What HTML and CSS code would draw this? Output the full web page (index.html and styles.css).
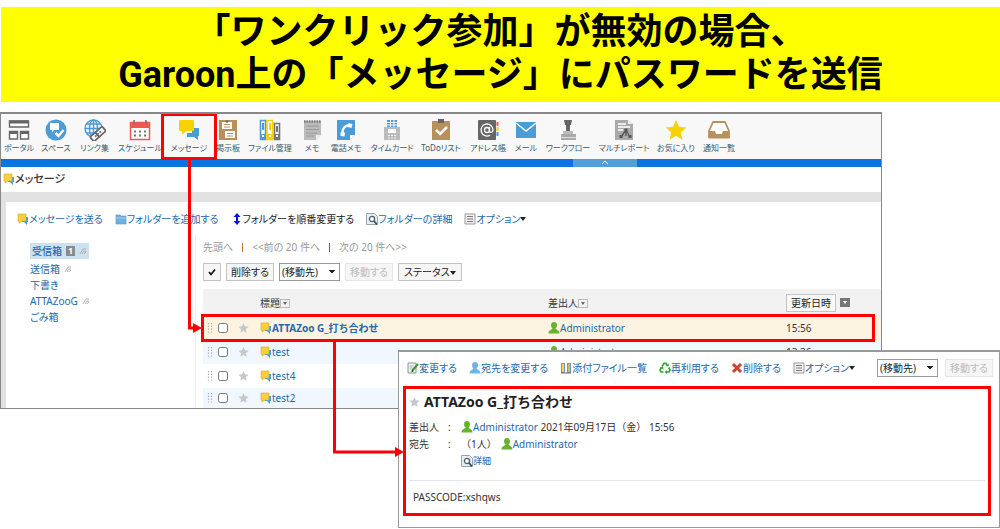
FILE: index.html
```html
<!DOCTYPE html>
<html lang="ja">
<head>
<meta charset="utf-8">
<title>メッセージ</title>
<link rel="stylesheet" href="styles.css">
</head>
<body>
<svg class="defs" aria-hidden="true">
  <symbol id="msg" viewBox="0 0 12 12"><path d="M5 4h6v5h-1v3L7 9H5z" fill="#3fa3e3"/><path d="M1 1h8v7H5l-3 2V8H1z" fill="#f9cf3e" stroke="#d9a92a" stroke-width=".6"/></symbol>
  <symbol id="folder" viewBox="0 0 12 12"><path d="M1 2h4l1 1h5v8H1z" fill="#6fb1dc" stroke="#4b93c5" stroke-width=".6"/><path d="M1 5h10" stroke="#a9d3ef"/></symbol>
  <symbol id="updown" viewBox="0 0 8 12"><path d="M4 0l3.500 4H5v4h2.500L4 12 .5 8H3V4H.5z" fill="#0a14e0"/></symbol>
  <symbol id="detail" viewBox="0 0 12 12"><path d="M.5.5h8l3 3v8H.5z" fill="#e6f0f2" stroke="#90a7ad"/><circle cx="6" cy="6" r="2.600" fill="#fff" stroke="#4d5f66" stroke-width="1.300"/><path d="M8 8l3 3.500" stroke="#3e4d52" stroke-width="1.800"/></symbol>
  <symbol id="list" viewBox="0 0 12 12"><path d="M1 1h10v10H1z" fill="#f2f2f2" stroke="#999"/><path d="M3 3.500h6M3 6h6M3 8.500h6" stroke="#777"/></symbol>
  <symbol id="rss" viewBox="0 0 8 8"><path d="M1 7l3-5h3M3 7l2-3h2M5 7l1-1.500h1" fill="none" stroke="#aaa" stroke-width=".9"/></symbol>
  <symbol id="star" viewBox="0 0 12 12"><path d="M6 .5l1.600 3.700 4 .4-3 2.700.9 4L6 9.200l-3.500 2.100.9-4-3-2.700 4-.4z"/></symbol>
  <symbol id="person" viewBox="0 0 12 12"><path d="M6 0c2 0 3 1.400 3 3.200C9 5 8 6 7.500 6.600 8 8 11.500 8 11.500 11.500H.5C.5 8 4 8 4.500 6.600 4 6 3 5 3 3.200 3 1.400 4 0 6 0z"/></symbol>
  <symbol id="edit" viewBox="0 0 12 12"><path d="M1 1h8v10H1z" fill="#f0f4f0" stroke="#8a9a92"/><path d="M2.500 4h4M2.500 6h3" stroke="#aab"/><path d="M11 2L5 9" stroke="#3c9b35" stroke-width="2.200"/><path d="M5.500 8L4 10.500l2.500-1.300z" fill="#333"/></symbol>
  <symbol id="files" viewBox="0 0 12 12"><path d="M1 1h10v10H1z" fill="#5aa0d4"/><path d="M2 2h2v8H2z" fill="#f4d35b"/><path d="M5 1h2v10H5z" fill="#fff"/><path d="M8 2h2v8H8z" fill="#e0b64a"/><path d="M1 11h10" stroke="#8a6a35"/></symbol>
  <symbol id="recycle" viewBox="0 0 12 12"><path d="M3 4.500L5 1.300h2l1.500 2.500M9.700 5.500L11 8l-1 2H7.500M4.500 10H2L1 8l1.500-2.700" fill="none" stroke="#2eab2e" stroke-width="1.700"/><path d="M6.800 4.300h3V1.500zM8 8v4L5.500 10zM.5 5.500l3.700-.8.3 2.800z" fill="#2eab2e"/></symbol>
  <symbol id="cross" viewBox="0 0 12 12"><path d="M2 2l8 8M10 2l-8 8" stroke="#d2402e" stroke-width="3"/></symbol>
  <symbol id="drag" viewBox="0 0 6 12"><path d="M1.500 1v11M4.500 1v11" stroke="#aaa" stroke-width="1.200" stroke-dasharray="1.200 1.600"/></symbol>
</svg>

<main class="stage">
  <h1 class="banner">「ワンクリック参加」が無効の場合、<br>Garoon上の「メッセージ」にパスワードを送信</h1>

  <section class="window">
    <nav class="apps">
      <a href="#"><svg viewBox="0 0 22 22"><path d="M1.500 2h19v6h-19zM1.500 12.500h8v7.500h-8zM12.500 12.500h8v7.500h-8z" fill="#fff" stroke="#666" stroke-width="1.400"/><path d="M1 1.500h20v3H1zM1 12h9v3H1zM12 12h9v3h-9z" fill="#666"/></svg>ポータル</a>
      <a href="#"><svg viewBox="0 0 22 22"><circle cx="11" cy="11" r="10.500" fill="#4a9bd6"/><path d="M5 4h9v7H9l-2 2.500V11H5z" fill="#fff"/><path d="M10.500 14l3 3 5-6" fill="none" stroke="#fff" stroke-width="2.500"/></svg>スペース</a>
      <a href="#"><svg viewBox="0 0 22 22"><g fill="none" stroke="#4a9bd6" stroke-width="1.400"><circle cx="9.500" cy="9.500" r="8.500"/><ellipse cx="9.500" cy="9.500" rx="4" ry="8.500"/><path d="M9.500 1v17M1 9.500h17M2.500 5h14M2.500 14h14"/></g><g transform="rotate(-42 14 15)" fill="#fff" stroke="#666" stroke-width="1.700"><rect x="6" y="12" width="9" height="6" rx="1"/><rect x="13" y="12" width="9" height="6" rx="1"/><path d="M10 15h8" stroke-dasharray="2 1"/></g></svg>リンク集</a>
      <a href="#"><svg viewBox="0 0 22 22"><path d="M1.500 3.500h19v17h-19z" fill="#fff" stroke="#ed5a4f" stroke-width="1.500"/><path d="M1 3h20v6H1z" fill="#ed5a4f"/><path d="M5 1v4M17 1v4" stroke="#777" stroke-width="1.600"/><path d="M5 12.500h12M5 16.500h12" stroke="#777" stroke-width="2" stroke-dasharray="2 3"/></svg>スケジュール</a>
      <a href="#" class="current"><svg viewBox="0 0 22 22"><path d="M14 9h7v8h-1v4l-4-3H9v-4h5z" fill="#4a9bd6"/><path d="M2 1h13a1 1 0 0 1 1 1v9a1 1 0 0 1-1 1H8l-4 4v-4H2a1 1 0 0 1-1-1V2a1 1 0 0 1 1-1z" fill="#f7d200"/></svg>メッセージ</a>
      <a href="#"><svg viewBox="0 0 22 22"><path d="M2 1h18v20H2z" fill="#b8905a"/><path d="M5 3h10v7H5zM8 12h10v7H8z" fill="#fff"/><path d="M7 5.500h6M7 8h6M10 14.500h6M10 17h6" stroke="#b8905a"/><circle cx="10" cy="2.500" r="1.200" fill="#666"/></svg>掲示板</a>
      <a href="#"><svg viewBox="0 0 22 22"><g fill="#fff" stroke-width="1.600"><path d="M1.500 1.500h5v19h-5z" stroke="#4a9bd6"/><path d="M8 1.500h5.500v19H8z" stroke="#f7d200"/><path d="M15.500 4.500h5v16h-5z" stroke="#777"/></g><path d="M3 4h2v7H3z" fill="#4a9bd6"/><path d="M10 4h2v7h-2z" fill="#f7d200"/><path d="M17 7h2v6h-2z" fill="#777"/><path d="M1 15h6v5H1z" fill="#4a9bd6"/><path d="M8 15h6v5H8z" fill="#f7d200"/><path d="M15 15h6v5h-6z" fill="#777"/><path d="M4 16v2M11 16v2M18 16v2" stroke="#fff" stroke-width="2"/></svg>ファイル管理</a>
      <a href="#"><svg viewBox="0 0 22 22"><path d="M3 2h17v14l-5 5H3z" fill="#bbb"/><path d="M3 2.500h17" stroke="#777" stroke-width="2.500" stroke-dasharray="1.500 1"/><path d="M5 7h13M5 10.500h13M5 14h11M5 17h8" stroke="#999"/><path d="M20 16h-5v5z" fill="#eee"/></svg>メモ</a>
      <a href="#"><svg viewBox="0 0 22 22"><path d="M2 1h18v15l-5 5H2z" fill="#4a9bd6"/><path d="M16 6.500c-5-1.500-10 3-8 10" fill="none" stroke="#fff" stroke-width="2.400"/><path d="M13.500 4l4 1-1 4-4-1zM5.500 13.500l4.500 0-.5 4-4-.5z" fill="#fff"/><path d="M20 16h-5v5z" fill="#fff"/></svg>電話メモ</a>
      <a href="#"><svg viewBox="0 0 22 22"><path d="M6 1h10v7H6z" fill="#4a9bd6"/><path d="M6 3.500h10M6 6h10M9.500 1v7M13 1v7" stroke="#fff"/><path d="M3 8h16v13H3z" fill="#bbb"/><path d="M7 10h8v4H7z" fill="#fff"/><path d="M7 16.500h8M7 19h8" stroke="#eee" stroke-dasharray="2 1"/></svg>タイムカード</a>
      <a href="#"><svg viewBox="0 0 22 22"><path d="M2 2h18v19H2z" fill="#b8905a"/><path d="M8 0h6v4H8z" fill="#666"/><path d="M6 11l4 4 7-7" fill="none" stroke="#fff" stroke-width="2.600"/></svg>ToDoリスト</a>
      <a href="#"><svg viewBox="0 0 22 22"><rect x="1" y="1" width="18" height="20" rx="1" fill="#666"/><path d="M19.500 3h2v4h-2z" fill="#ed5a4f"/><path d="M19.500 8h2v4h-2z" fill="#f7d200"/><path d="M19.500 13h2v4h-2z" fill="#4a9bd6"/><circle cx="10" cy="11" r="2.500" fill="none" stroke="#fff" stroke-width="1.300"/><path d="M12.500 8v4c0 2 3.500 2 3.500-1a6 6 0 1 0-3 5.200" fill="none" stroke="#fff" stroke-width="1.300"/></svg>アドレス帳</a>
      <a href="#"><svg viewBox="0 0 22 22"><path d="M1 3h20v16H1z" fill="#4a9bd6"/><path d="M1 4l10 8 10-8" fill="none" stroke="#fff" stroke-width="1.500"/></svg>メール</a>
      <a href="#"><svg viewBox="0 0 22 22"><path d="M7 1h8l-1 5h-1v7H9V6H8z" fill="#666"/><path d="M6 12h10v4H6z" fill="#bbb"/><path d="M4 15h15v6H4z" fill="#aaa"/><path d="M4 18.500h15" stroke="#ddd"/></svg>ワークフロー</a>
      <a href="#"><svg viewBox="0 0 22 22"><path d="M2 1h13l5 4v16H2z" fill="#aaa"/><path d="M15 1v4h5z" fill="#eee"/><path d="M5 5h8M5 8h12M5 11h5" stroke="#fff" stroke-width="1.300"/><path d="M13 11l-5 7M13 11l4 7M13 12v5" fill="none" stroke="#555" stroke-width="1.300"/><path d="M11.500 9.500h3v3h-3zM6.500 16h3v3h-3zM15.500 16h3v3h-3z" fill="#555"/></svg>マルチレポート</a>
      <a href="#"><svg viewBox="0 0 12 12" fill="#f7d200"><use href="#star"/></svg>お気に入り</a>
      <a href="#"><svg viewBox="0 0 22 22"><path d="M5 3h12l4 9v6.500H1V12z" fill="#fff" stroke="#b8905a" stroke-width="1.800" stroke-linejoin="round"/><path d="M1 12h6l1 3h6l1-3h6v7H1z" fill="#b8905a"/></svg>通知一覧</a>
    </nav>
    <div class="bluebar"><button class="fold" aria-label="折りたたむ"><svg viewBox="0 0 8 5"><path d="M1 4l3-3 3 3" fill="none" stroke="#fff"/></svg></button></div>
    <h2 class="title"><svg class="ic"><use href="#msg"/></svg>メッセージ</h2>

    <div class="body">
      <div class="tools">
        <a href="#"><svg class="ic"><use href="#msg"/></svg>メッセージを送る</a>
        <a href="#"><svg class="ic"><use href="#folder"/></svg>フォルダーを追加する</a>
        <a href="#" class="dark"><svg class="ic"><use href="#updown"/></svg>フォルダーを順番変更する</a>
        <a href="#"><svg class="ic"><use href="#detail"/></svg>フォルダーの詳細</a>
        <a href="#"><svg class="ic"><use href="#list"/></svg>オプション<i class="caret"></i></a>
      </div>
      <div class="split">
        <ul class="tree">
          <li><a href="#" class="selected">受信箱<b class="count">1</b><svg class="rss"><use href="#rss"/></svg></a></li>
          <li><a href="#">送信箱<svg class="rss"><use href="#rss"/></svg></a></li>
          <li><a href="#">下書き</a></li>
          <li><a href="#">ATTAZooG<svg class="rss"><use href="#rss"/></svg></a></li>
          <li><a href="#">ごみ箱</a></li>
        </ul>
        <div class="listing">
          <div class="pager"><span>先頭へ</span><i class="bar"></i><span>&lt;&lt;前の 20 件へ</span><i class="bar violet"></i><span>次の 20 件へ&gt;&gt;</span></div>
          <div class="actions">
            <button aria-label="すべて選択"><svg class="tick" viewBox="0 0 8 8"><path d="M1 4l2 2.500L7 1.500" fill="none" stroke="#111" stroke-width="1.700"/></svg></button>
            <button>削除する</button>
            <select aria-label="移動先"><option>(移動先)</option></select>
            <button disabled>移動する</button>
            <button class="status">ステータス<i class="caret"></i></button>
          </div>
          <div class="mailbox">
          <table class="mails">
            <colgroup><col class="c-drag"><col class="c-check"><col class="c-star"><col><col class="c-from"><col class="c-date"></colgroup>
            <thead><tr><th></th><th></th><th></th><th>標題<i class="sort"></i></th><th>差出人<i class="sort"></i></th><th><span class="updated"><button>更新日時</button><i class="sort solid"></i></span></th></tr></thead>
            <tbody>
              <tr class="unread"><td><svg class="drag"><use href="#drag"/></svg></td><td><input type="checkbox" aria-label="ATTAZoo G_打ち合わせ"></td><td><svg class="ic star"><use href="#star"/></svg></td><td><a href="#"><svg class="ic"><use href="#msg"/></svg>ATTAZoo G_打ち合わせ</a></td><td><a href="#"><svg class="ic green"><use href="#person"/></svg>Administrator</a></td><td>15:56</td></tr>
              <tr><td><svg class="drag"><use href="#drag"/></svg></td><td><input type="checkbox" aria-label="test"></td><td><svg class="ic star"><use href="#star"/></svg></td><td><a href="#"><svg class="ic"><use href="#msg"/></svg>test</a></td><td><a href="#"><svg class="ic green"><use href="#person"/></svg>Administrator</a></td><td>13:36</td></tr>
              <tr><td><svg class="drag"><use href="#drag"/></svg></td><td><input type="checkbox" aria-label="test4"></td><td><svg class="ic star"><use href="#star"/></svg></td><td><a href="#"><svg class="ic"><use href="#msg"/></svg>test4</a></td><td></td><td></td></tr>
              <tr><td><svg class="drag"><use href="#drag"/></svg></td><td><input type="checkbox" aria-label="test2"></td><td><svg class="ic star"><use href="#star"/></svg></td><td><a href="#"><svg class="ic"><use href="#msg"/></svg>test2</a></td><td></td><td></td></tr>
            </tbody>
          </table>
          </div>
        </div>
      </div>
    </div>
  </section>

  <section class="detail">
    <div class="tools">
      <a href="#"><svg class="ic"><use href="#edit"/></svg>変更する</a>
      <a href="#"><svg class="ic blue"><use href="#person"/></svg>宛先を変更する</a>
      <a href="#"><svg class="ic"><use href="#files"/></svg>添付ファイル一覧</a>
      <a href="#"><svg class="ic"><use href="#recycle"/></svg>再利用する</a>
      <a href="#"><svg class="ic"><use href="#cross"/></svg>削除する</a>
      <a href="#"><svg class="ic"><use href="#list"/></svg>オプション<i class="caret"></i></a>
      <span class="move"><select aria-label="移動先"><option>(移動先)</option></select><button disabled>移動する</button></span>
    </div>
    <article class="message">
      <h2><svg class="ic star"><use href="#star"/></svg>ATTAZoo G_打ち合わせ</h2>
      <dl>
        <dt>差出人</dt><dd><span class="colon">:</span><a href="#"><svg class="ic green"><use href="#person"/></svg>Administrator</a> 2021年09月17日（金） 15:56</dd>
        <dt>宛先</dt><dd><span class="colon">:</span><span class="people">（1人）</span><a href="#"><svg class="ic green"><use href="#person"/></svg>Administrator</a></dd>
        <dt></dt><dd><span class="colon"></span><a href="#" class="small"><svg class="ic"><use href="#detail"/></svg>詳細</a></dd>
      </dl>
      <p class="text">PASSCODE:xshqws</p>
    </article>
  </section>

  <svg class="arrow first" viewBox="0 0 14 174" aria-hidden="true"><path d="M1.500 0v168H8" fill="none" stroke="red" stroke-width="3"/><path d="M5 163l9 5-9 5z" fill="red"/></svg>
  <svg class="arrow second" viewBox="0 0 71 118" aria-hidden="true"><path d="M1.500 0v110H64" fill="none" stroke="red" stroke-width="3"/><path d="M62 105l9 5-9 5z" fill="red"/></svg>
</main>
</body>
</html>
```
FILE: styles.css
```css
*, ::before, ::after { box-sizing: border-box; }
body {
  margin: 0;
  background: #fff;
  color: #333;
  font: 10px/16px "Noto Sans", "Noto Sans CJK JP", sans-serif;
  font-feature-settings: "palt";
}
.defs { position: absolute; width: 0; height: 0; }
a { color: #2468ad; text-decoration: none; }
h1, h2, ul, dl, dd, p { margin: 0; padding: 0; }
button, select { font: inherit; color: #222; }

.stage { position: relative; padding-top: 7px; }

.banner {
  margin-left: 1px;
  padding: 4px 0 5px;
  background: #ff0;
  color: #000;
  font: 700 36px/43px Roboto, "Noto Sans CJK JP", sans-serif;
  font-feature-settings: normal;
  text-align: center;
  white-space: nowrap;
}

.window {
  width: 88.2%;
  margin-top: 10px;
  border: 1px solid #888;
  border-top-width: 2px;
  overflow: hidden;
}
.apps {
  display: grid;
  grid-template-columns: 36px 38px 39px 52px 46px 32px 52px 32px 36px 56px 42px 52px 24px 60px 52px 52px 34px;
  padding: 5px 0 4px;
  background: #f8f8f8;
}
.apps a {
  display: flex;
  flex-direction: column;
  align-items: center;
  color: #35596f;
  font-size: 8px;
  line-height: 14px;
  white-space: nowrap;
}
.apps svg { width: 22px; height: 22px; }
.apps .current { position: relative; }
.apps .current::after {
  content: "";
  position: absolute;
  inset: -6px -5px -5px;
  border: 3px solid #f00;
}
.bluebar { display: flex; height: 8px; background: #0d73dd; }
.fold {
  display: flex;
  justify-content: center;
  width: 64px;
  margin-left: 65%;
  padding: 1px;
  border: 0;
  background: #539fdc;
}
.fold svg { width: 8px; height: 5px; }
.title {
  display: flex;
  align-items: center;
  height: 25px;
  padding: 0 0 2px 2px;
  font-size: 11px;
  font-weight: 500;
}
.ic { width: 12px; height: 12px; flex: none; }
.star { width: 11px; fill: #c8c8c8; }
.green { fill: #67b32e; }
.blue { fill: #6db5e8; }

.body { border-top: 10px solid #e2e2e2; border-left: 5px solid #e2e2e2; }
.tools { display: flex; align-items: center; gap: 12px; white-space: nowrap; }
.tools a { display: flex; align-items: center; }
.tools .dark { color: #222; }
.body .tools { padding: 9px 0 8px 11px; }
.caret {
  display: inline-block;
  border: 3px solid transparent;
  border-top: 4px solid #222;
  border-bottom: 0;
  vertical-align: middle;
}
.split { display: grid; grid-template-columns: 189px 1fr; }
.tree { padding: 8px 0 0 24px; list-style: none; }
.tree li { height: 16px; }
.tree li:first-child { height: 18px; }
.tree a { display: inline-flex; align-items: center; gap: 4px; }
.tree .selected {
  height: 16px;
  padding: 0 2px;
  background: #cbe3f1;
  font-weight: 500;
}
.count {
  width: 9px;
  background: #8a8a8a;
  color: #fff;
  font-size: 9px;
  line-height: 10px;
  text-align: center;
}
.rss { width: 8px; height: 8px; }
.listing { border-left: 1px solid #eee; padding: 4px 0 0 7px; }
.pager { display: flex; align-items: center; gap: 9px; color: #999; }
.bar { width: 1px; height: 9px; background: #b07c4c; }
.violet { background: #8e4c94; }
.actions { display: flex; gap: 5px; margin: 8px 0; }
.actions button, .actions select, .move button, .move select, .updated button {
  height: 18px;
  padding: 0 4px;
  border: 1px solid #c4c4c4;
  background: #f6f6f6;
  line-height: 14px;
  white-space: nowrap;
}
.actions select, .move select {
  appearance: none;
  width: 61px;
  padding: 0 2px;
  border-color: #999;
  background:
    linear-gradient(to top right, transparent 50%, #222 50%) no-repeat right 7px center / 3px 4px,
    linear-gradient(to top left, transparent 50%, #222 50%) no-repeat right 4px center / 3px 4px,
    #fff;
}
.actions button:disabled, .move button:disabled { color: #bbb; border-color: #e6e6e6; }
.actions .status { padding: 0 5px; }
.tick { width: 8px; height: 8px; }

.mailbox { position: relative; }
.mailbox::after {
  content: "";
  position: absolute;
  top: 25px;
  left: -2px;
  right: 6px;
  height: 28px;
  border: 3px solid #f00;
}
.mails { width: 100%; border-collapse: collapse; table-layout: fixed; }
.c-drag { width: 15px; }
.c-check { width: 20px; }
.c-star { width: 22px; }
.c-from { width: 238px; }
.c-date { width: 95px; }
.mails th {
  height: 27px;
  padding: 0;
  background: #f2f2f2;
  font-weight: 400;
  text-align: left;
}
.mails td { height: 24px; padding: 0; line-height: 16px; }
.mails tr:last-child td { height: 20px; }
.mails tbody tr:nth-child(even) { background: #f0f7fe; }
.mails .unread { background: #fdf3e1; }
.mails a { display: flex; align-items: center; }
.unread td:nth-child(4) a { font-weight: 700; font-feature-settings: normal; }
.mails input { display: block; width: 10px; height: 10px; margin: 0; }
.mails .drag { display: block; width: 6px; height: 12px; margin-left: 4px; }
.mails td .star { display: block; }
.sort {
  display: inline-flex;
  align-items: center;
  justify-content: center;
  width: 10px;
  height: 9px;
  border: 1px solid #bbb;
  color: #666;
  vertical-align: middle;
}
.sort::before {
  content: "";
  border: 2px solid transparent;
  border-top: 3px solid currentColor;
  border-bottom: 0;
}
.updated { display: flex; align-items: center; gap: 4px; }
.updated button { background: #f8f8f8; }
.solid { background: #777; border-color: #777; color: #fff; }

.detail {
  position: relative;
  margin: -59px 0 0 39.8%;
  border: 1px solid #999;
  border-top-width: 2px;
  background: #fff;
  padding: 7px 6px 11px 4px;
}
.detail .tools { padding: 0 0 9px 4px; }
.move { display: flex; gap: 7px; margin-left: auto; }
.message { border: 3px solid #f00; margin-right: 2px; padding: 4px 3px 8px; font-feature-settings: normal; }
.message h2 {
  display: flex;
  align-items: center;
  gap: 4px;
  color: #222;
  font-size: 14px;
  line-height: 18px;
}
.message dl {
  display: grid;
  grid-template-columns: 35px 1fr;
  row-gap: 1px;
  padding: 8px 0 11px;
  border-bottom: 1px solid #e4e4e4;
}
.message dd, .message dd a { display: flex; align-items: center; white-space: pre; }
.colon { width: 17px; padding-left: 4px; }
.people { margin-right: 4px; }
.message .small { font-size: 9px; }
.text { padding: 8px 4px 0; }

.arrow { position: absolute; }
.first { left: 188px; top: 160px; width: 14px; height: 174px; }
.second { left: 333px; top: 342px; width: 71px; height: 118px; }
```
